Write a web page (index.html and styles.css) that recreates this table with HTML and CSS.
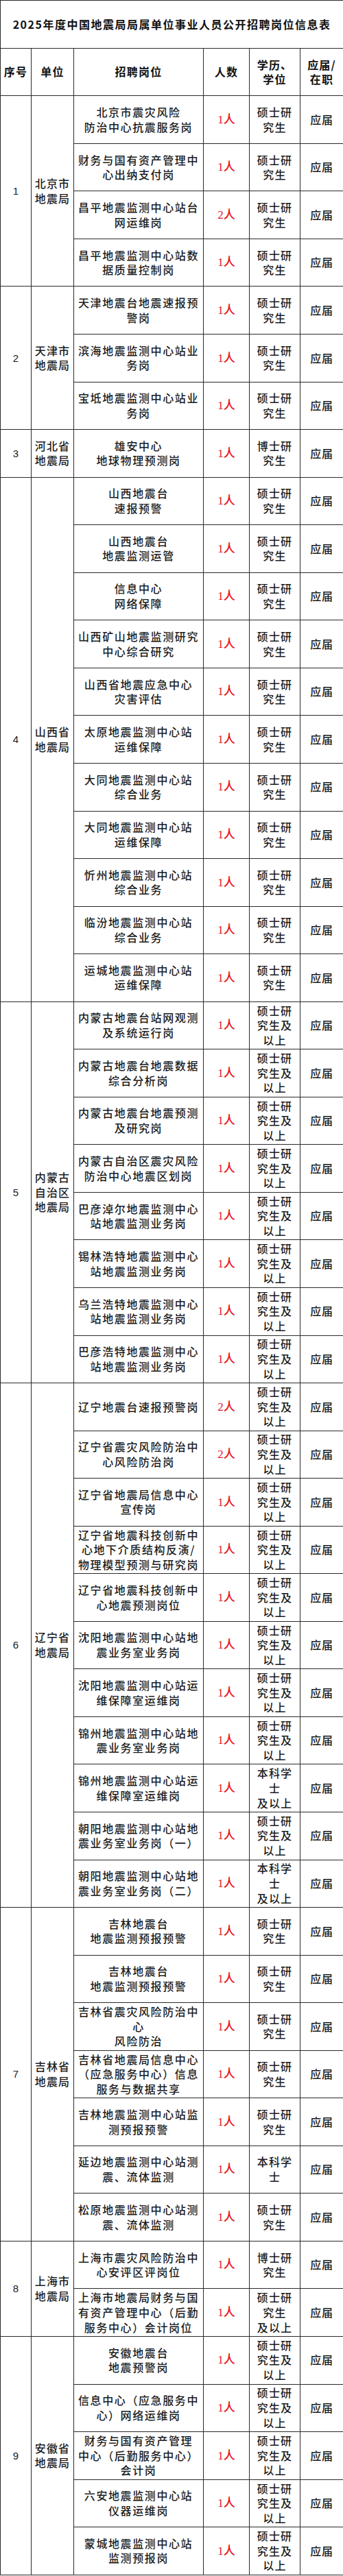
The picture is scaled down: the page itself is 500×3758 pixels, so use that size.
FILE: index.html
```html
<!DOCTYPE html>
<html lang="zh-CN">
<head>
<meta charset="utf-8">
<title>2025年度中国地震局局属单位事业人员公开招聘岗位信息表</title>
<link rel="stylesheet" href="styles.css">
</head>
<body>
<table class="sheet">
  <colgroup>
    <col class="c-no"><col class="c-unit"><col class="c-post"><col class="c-num"><col class="c-edu"><col class="c-type">
  </colgroup>
  <tr class="title-row"><td colspan="6" class="title">2025年度中国地震局局属单位事业人员公开招聘岗位信息表</td></tr>
  <tr class="head-row">
    <th>序号</th><th>单位</th><th class="h-post">招聘岗位</th><th>人数</th><th>学历、<br>学位</th><th>应届/<br>在职</th>
  </tr>

  <tr class="row"><td class="no" rowspan="4">1</td><td class="unit" rowspan="4">北京市<br>地震局</td>
    <td class="post">北京市震灾风险<br>防治中心抗震服务岗</td><td class="num">1人</td><td class="edu">硕士研<br>究生</td><td class="type">应届</td></tr>
  <tr class="row"><td class="post">财务与国有资产管理中<br>心出纳支付岗</td><td class="num">1人</td><td class="edu">硕士研<br>究生</td><td class="type">应届</td></tr>
  <tr class="row"><td class="post">昌平地震监测中心站台<br>网运维岗</td><td class="num">2人</td><td class="edu">硕士研<br>究生</td><td class="type">应届</td></tr>
  <tr class="row"><td class="post">昌平地震监测中心站数<br>据质量控制岗</td><td class="num">1人</td><td class="edu">硕士研<br>究生</td><td class="type">应届</td></tr>

  <tr class="row"><td class="no" rowspan="3">2</td><td class="unit" rowspan="3">天津市<br>地震局</td>
    <td class="post">天津地震台地震速报预<br>警岗</td><td class="num">1人</td><td class="edu">硕士研<br>究生</td><td class="type">应届</td></tr>
  <tr class="row"><td class="post">滨海地震监测中心站业<br>务岗</td><td class="num">1人</td><td class="edu">硕士研<br>究生</td><td class="type">应届</td></tr>
  <tr class="row"><td class="post">宝坻地震监测中心站业<br>务岗</td><td class="num">1人</td><td class="edu">硕士研<br>究生</td><td class="type">应届</td></tr>

  <tr class="row"><td class="no">3</td><td class="unit">河北省<br>地震局</td>
    <td class="post">雄安中心<br>地球物理预测岗</td><td class="num">1人</td><td class="edu">博士研<br>究生</td><td class="type">应届</td></tr>

  <tr class="row"><td class="no" rowspan="11">4</td><td class="unit" rowspan="11">山西省<br>地震局</td>
    <td class="post">山西地震台<br>速报预警</td><td class="num">1人</td><td class="edu">硕士研<br>究生</td><td class="type">应届</td></tr>
  <tr class="row"><td class="post">山西地震台<br>地震监测运管</td><td class="num">1人</td><td class="edu">硕士研<br>究生</td><td class="type">应届</td></tr>
  <tr class="row"><td class="post">信息中心<br>网络保障</td><td class="num">1人</td><td class="edu">硕士研<br>究生</td><td class="type">应届</td></tr>
  <tr class="row"><td class="post">山西矿山地震监测研究<br>中心综合研究</td><td class="num">1人</td><td class="edu">硕士研<br>究生</td><td class="type">应届</td></tr>
  <tr class="row"><td class="post">山西省地震应急中心<br>灾害评估</td><td class="num">1人</td><td class="edu">硕士研<br>究生</td><td class="type">应届</td></tr>
  <tr class="row"><td class="post">太原地震监测中心站<br>运维保障</td><td class="num">1人</td><td class="edu">硕士研<br>究生</td><td class="type">应届</td></tr>
  <tr class="row"><td class="post">大同地震监测中心站<br>综合业务</td><td class="num">1人</td><td class="edu">硕士研<br>究生</td><td class="type">应届</td></tr>
  <tr class="row"><td class="post">大同地震监测中心站<br>运维保障</td><td class="num">1人</td><td class="edu">硕士研<br>究生</td><td class="type">应届</td></tr>
  <tr class="row"><td class="post">忻州地震监测中心站<br>综合业务</td><td class="num">1人</td><td class="edu">硕士研<br>究生</td><td class="type">应届</td></tr>
  <tr class="row"><td class="post">临汾地震监测中心站<br>综合业务</td><td class="num">1人</td><td class="edu">硕士研<br>究生</td><td class="type">应届</td></tr>
  <tr class="row"><td class="post">运城地震监测中心站<br>运维保障</td><td class="num">1人</td><td class="edu">硕士研<br>究生</td><td class="type">应届</td></tr>

  <tr class="row"><td class="no" rowspan="8">5</td><td class="unit" rowspan="8">内蒙古<br>自治区<br>地震局</td>
    <td class="post">内蒙古地震台站网观测<br>及系统运行岗</td><td class="num">1人</td><td class="edu">硕士研<br>究生及<br>以上</td><td class="type">应届</td></tr>
  <tr class="row"><td class="post">内蒙古地震台地震数据<br>综合分析岗</td><td class="num">1人</td><td class="edu">硕士研<br>究生及<br>以上</td><td class="type">应届</td></tr>
  <tr class="row"><td class="post">内蒙古地震台地震预测<br>及研究岗</td><td class="num">1人</td><td class="edu">硕士研<br>究生及<br>以上</td><td class="type">应届</td></tr>
  <tr class="row"><td class="post">内蒙古自治区震灾风险<br>防治中心地震区划岗</td><td class="num">1人</td><td class="edu">硕士研<br>究生及<br>以上</td><td class="type">应届</td></tr>
  <tr class="row"><td class="post">巴彦淖尔地震监测中心<br>站地震监测业务岗</td><td class="num">1人</td><td class="edu">硕士研<br>究生及<br>以上</td><td class="type">应届</td></tr>
  <tr class="row"><td class="post">锡林浩特地震监测中心<br>站地震监测业务岗</td><td class="num">1人</td><td class="edu">硕士研<br>究生及<br>以上</td><td class="type">应届</td></tr>
  <tr class="row"><td class="post">乌兰浩特地震监测中心<br>站地震监测业务岗</td><td class="num">1人</td><td class="edu">硕士研<br>究生及<br>以上</td><td class="type">应届</td></tr>
  <tr class="row"><td class="post">巴彦浩特地震监测中心<br>站地震监测业务岗</td><td class="num">1人</td><td class="edu">硕士研<br>究生及<br>以上</td><td class="type">应届</td></tr>

  <tr class="row"><td class="no" rowspan="11">6</td><td class="unit" rowspan="11">辽宁省<br>地震局</td>
    <td class="post">辽宁地震台速报预警岗</td><td class="num">2人</td><td class="edu">硕士研<br>究生及<br>以上</td><td class="type">应届</td></tr>
  <tr class="row"><td class="post">辽宁省震灾风险防治中<br>心风险防治岗</td><td class="num">2人</td><td class="edu">硕士研<br>究生及<br>以上</td><td class="type">应届</td></tr>
  <tr class="row"><td class="post">辽宁省地震局信息中心<br>宣传岗</td><td class="num">1人</td><td class="edu">硕士研<br>究生及<br>以上</td><td class="type">应届</td></tr>
  <tr class="row"><td class="post">辽宁省地震科技创新中<br>心地下介质结构反演/<br>物理模型预测与研究岗</td><td class="num">1人</td><td class="edu">硕士研<br>究生及<br>以上</td><td class="type">应届</td></tr>
  <tr class="row"><td class="post">辽宁省地震科技创新中<br>心地震预测岗位</td><td class="num">1人</td><td class="edu">硕士研<br>究生及<br>以上</td><td class="type">应届</td></tr>
  <tr class="row"><td class="post">沈阳地震监测中心站地<br>震业务室业务岗</td><td class="num">1人</td><td class="edu">硕士研<br>究生及<br>以上</td><td class="type">应届</td></tr>
  <tr class="row"><td class="post">沈阳地震监测中心站运<br>维保障室运维岗</td><td class="num">1人</td><td class="edu">硕士研<br>究生及<br>以上</td><td class="type">应届</td></tr>
  <tr class="row"><td class="post">锦州地震监测中心站地<br>震业务室业务岗</td><td class="num">1人</td><td class="edu">硕士研<br>究生及<br>以上</td><td class="type">应届</td></tr>
  <tr class="row"><td class="post">锦州地震监测中心站运<br>维保障室运维岗</td><td class="num">1人</td><td class="edu">本科学<br>士<br>及以上</td><td class="type">应届</td></tr>
  <tr class="row"><td class="post">朝阳地震监测中心站地<br>震业务室业务岗（一）</td><td class="num">1人</td><td class="edu">硕士研<br>究生及<br>以上</td><td class="type">应届</td></tr>
  <tr class="row"><td class="post">朝阳地震监测中心站地<br>震业务室业务岗（二）</td><td class="num">1人</td><td class="edu">本科学<br>士<br>及以上</td><td class="type">应届</td></tr>

  <tr class="row"><td class="no" rowspan="7">7</td><td class="unit" rowspan="7">吉林省<br>地震局</td>
    <td class="post">吉林地震台<br>地震监测预报预警</td><td class="num">1人</td><td class="edu">硕士研<br>究生</td><td class="type">应届</td></tr>
  <tr class="row"><td class="post">吉林地震台<br>地震监测预报预警</td><td class="num">1人</td><td class="edu">硕士研<br>究生</td><td class="type">应届</td></tr>
  <tr class="row"><td class="post">吉林省震灾风险防治中<br>心<br>风险防治</td><td class="num">1人</td><td class="edu">硕士研<br>究生</td><td class="type">应届</td></tr>
  <tr class="row"><td class="post">吉林省地震局信息中心<br>（应急服务中心）信息<br>服务与数据共享</td><td class="num">1人</td><td class="edu">硕士研<br>究生</td><td class="type">应届</td></tr>
  <tr class="row"><td class="post">吉林地震监测中心站监<br>测预报预警</td><td class="num">1人</td><td class="edu">硕士研<br>究生</td><td class="type">应届</td></tr>
  <tr class="row"><td class="post">延边地震监测中心站测<br>震、流体监测</td><td class="num">1人</td><td class="edu">本科学<br>士</td><td class="type">应届</td></tr>
  <tr class="row"><td class="post">松原地震监测中心站测<br>震、流体监测</td><td class="num">1人</td><td class="edu">硕士研<br>究生</td><td class="type">应届</td></tr>

  <tr class="row"><td class="no" rowspan="2">8</td><td class="unit" rowspan="2">上海市<br>地震局</td>
    <td class="post">上海市震灾风险防治中<br>心安评区评岗位</td><td class="num">1人</td><td class="edu">博士研<br>究生</td><td class="type">应届</td></tr>
  <tr class="row"><td class="post">上海市地震局财务与国<br>有资产管理中心（后勤<br>服务中心）会计岗位</td><td class="num">1人</td><td class="edu">硕士研<br>究生<br>及以上</td><td class="type">应届</td></tr>

  <tr class="row"><td class="no" rowspan="5">9</td><td class="unit" rowspan="5">安徽省<br>地震局</td>
    <td class="post">安徽地震台<br>地震预警岗</td><td class="num">1人</td><td class="edu">硕士研<br>究生及<br>以上</td><td class="type">应届</td></tr>
  <tr class="row"><td class="post">信息中心（应急服务中<br>心）网络运维岗</td><td class="num">1人</td><td class="edu">硕士研<br>究生及<br>以上</td><td class="type">应届</td></tr>
  <tr class="row"><td class="post">财务与国有资产管理<br>中心（后勤服务中心）<br>会计岗</td><td class="num">1人</td><td class="edu">硕士研<br>究生及<br>以上</td><td class="type">应届</td></tr>
  <tr class="row"><td class="post">六安地震监测中心站<br>仪器运维岗</td><td class="num">1人</td><td class="edu">硕士研<br>究生及<br>以上</td><td class="type">应届</td></tr>
  <tr class="row"><td class="post">蒙城地震监测中心站<br>监测预报岗</td><td class="num">1人</td><td class="edu">硕士研<br>究生及<br>以上</td><td class="type">应届</td></tr>
</table>
</body>
</html>
```

FILE: styles.css
```css
html, body {
  margin: 0;
  padding: 0;
  background: #ffffff;
}

.sheet {
  border-collapse: collapse;
  table-layout: fixed;
  width: 500px;
  font-family: "Noto Sans CJK SC", "Noto Sans", sans-serif;
  color: #1c1c1c;
}

.c-no { width: 45px; }
.c-unit { width: 62px; }
.c-post { width: 189px; }
.c-num { width: 67px; }
.c-edu { width: 74px; }
.c-type { width: 63px; }

.sheet td,
.sheet th {
  border: 1px solid #2a2a2a;
  padding: 0;
  text-align: center;
  vertical-align: middle;
  font-size: 16px;
  line-height: 21.6px;
  white-space: nowrap;
  font-weight: 500;
  letter-spacing: 1.2px;
}

.title-row {
  height: 70px;
}

.sheet .title {
  font-weight: 700;
  font-size: 16px;
  letter-spacing: 1.5px;
  color: #111;
}

.head-row {
  height: 69.3px;
}

.sheet th {
  font-weight: 700;
  color: #111;
}

.row {
  height: 69.56px;
}

.sheet .no {
  font-family: "Liberation Sans", "Noto Sans CJK SC", sans-serif;
  font-size: 15px;
  letter-spacing: 0;
}

.sheet .post {
  letter-spacing: 1.6px;
}

.sheet .num {
  font-family: "Liberation Serif", "Noto Sans CJK SC", serif;
  color: #e8141c;
  font-size: 17px;
  letter-spacing: 0;
}

.sheet .type {
  letter-spacing: 0.7px;
}
```
